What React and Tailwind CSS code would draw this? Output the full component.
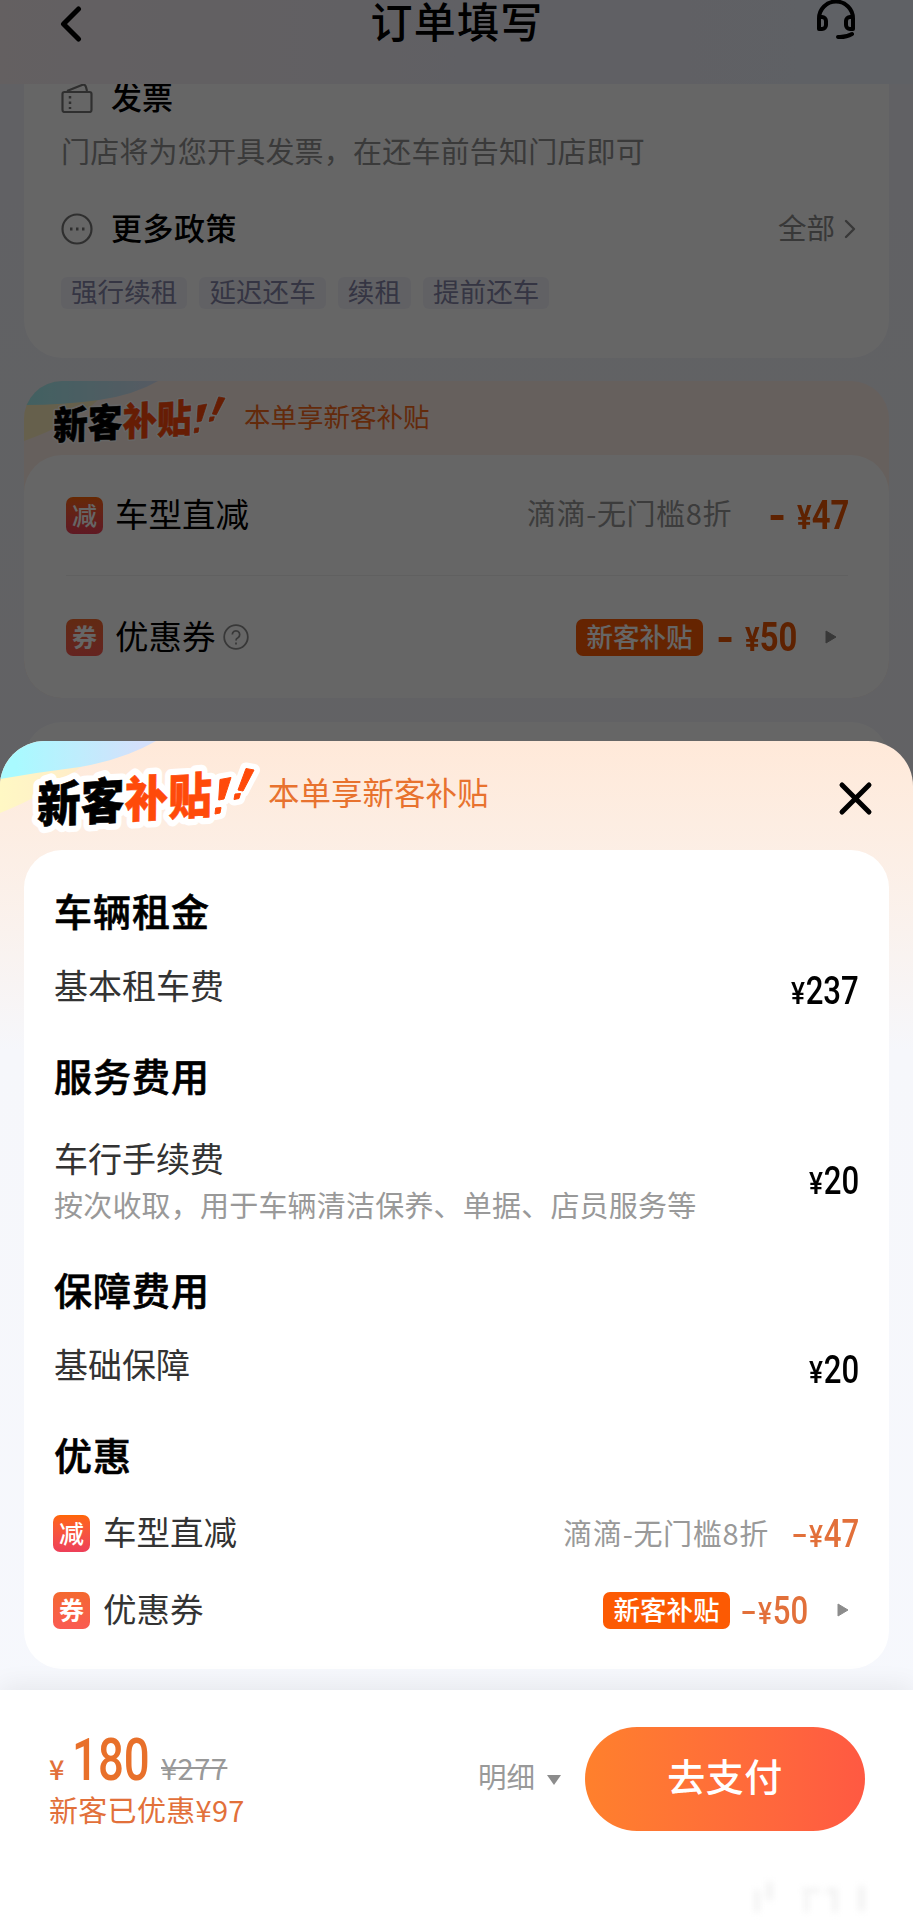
import { ChevronRight } from 'lucide-react';

const tags = ['强行续租', '延迟还车', '续租', '提前还车'];

const marks = 'M187 18.5L198 16.5L191 38L185.7 39z M182.7 47L188 46.5L187 52L182 53z M213 7.5L221 9L210 30L205 29z M202 33L207.5 32.5L206 37.5L201 38.5z';

function PromoLogo({ className, outline = 12 }) {
    return (
        <svg className={className} viewBox="0 0 226 72" overflow="visible" fontFamily='"Noto Sans CJK SC", sans-serif' fontWeight="900" fontSize="43.5">
            <g fill="#fff" stroke="#fff" strokeWidth={outline} strokeLinejoin="round">
                <text transform="translate(4 62) rotate(-3.4) skewX(-4) scale(1 1.12)" textLength="175">新客补贴</text>
                <path d={marks} />
            </g>
            <text transform="translate(4 62) rotate(-3.4) skewX(-4) scale(1 1.12)" textLength="175" strokeWidth="0.6">
                <tspan fill="#000" stroke="#000">新客</tspan>
                <tspan fill="#ff4a0a" stroke="#ff4a0a">补贴</tspan>
            </text>
            <path fill="#ff4a0a" stroke="#ff4a0a" d={marks} />
        </svg>
    );
}

function DiscountIcon({ children, coupon }) {
    return (
        <span className={`flex size-[37px] shrink-0 items-center justify-center rounded-[7px] bg-gradient-to-b text-[25px] leading-none text-white
            ${coupon ? 'from-[#f4692e] to-[#fa5a52] font-bold' : 'from-[#ff6500] to-[#ee3f58] font-medium'}`}>
            <span className="-mt-[1px]">{children}</span>
        </span>
    );
}

function Amount({ value, minus }) {
    return (
        <span className={`inline-flex origin-right scale-x-[0.82] items-baseline font-[Roboto] text-[38px] leading-none font-medium whitespace-nowrap
            ${minus ? 'text-[#e2703a]' : 'text-black'}`}>
            {minus && <span className="mr-[4px] mb-[16px] h-[3.5px] w-[15px] self-end bg-current" />}
            <span className="mr-[1px] text-[32px]">¥</span>{value}
        </span>
    );
}

function BoldAmount({ value }) {
    return (
        <span className="inline-flex origin-right scale-x-[0.8] items-baseline font-[Roboto] text-[41px] leading-none font-bold whitespace-nowrap text-[#ea5504]">
            <span className="mr-[17px] mb-[16px] h-[5px] w-[16px] self-end bg-current" />
            <span className="text-[34px]">¥</span>{value}
        </span>
    );
}

function Badge() {
    return (
        <span className="flex h-[37px] w-[127px] items-center justify-center rounded-[7px] bg-[#fc5a03] text-[26.5px] leading-none font-medium text-white">
            <span className="-mt-[2px]">新客补贴</span>
        </span>
    );
}

function Triangle({ className }) {
    return (
        <svg className={className} width="12" height="14" viewBox="0 0 12 14" fill="#8c8c8c">
            <path d="M1 1l10 6l-10 6z" stroke="#8c8c8c" strokeLinejoin="round" />
        </svg>
    );
}

function OrderPage() {
    return (
        <div className="h-[1921px] overflow-hidden bg-gradient-to-b from-[#f2f2fa] via-[#f5f7fc] to-[#f8f8f8]">
            <header className="flex h-[84px] items-start justify-between bg-gradient-to-r from-[#f9f0f3] via-[#f1eff9] to-[#edf3fd] pr-[57px] pl-[60px]">
                <svg className="mt-[5px]" width="22" height="38" viewBox="0 0 22 38" fill="none" stroke="#000" strokeWidth="5" strokeLinecap="round" strokeLinejoin="round">
                    <path d="M18.5 4L3.5 19L18.5 34" />
                </svg>
                <h1 className="ml-[16px] text-[42px] leading-[40px] font-medium tracking-[1.2px]">订单填写</h1>
                <svg width="40" height="40" viewBox="0 0 40 40" fill="none" stroke="#000" strokeWidth="4" strokeLinecap="round" strokeLinejoin="round">
                    <path d="M3 29V18.5A17 17 0 0 1 37 18.5V29M3 17H6A4 4 0 0 1 10 21V25A4 4 0 0 1 6 29H3M37 17H34A4 4 0 0 0 30 21V25A4 4 0 0 0 34 29H37M36 34Q30 37.5 22 37" />
                </svg>
            </header>

            <section className="mx-[24px] h-[274px] overflow-hidden rounded-b-[38px] bg-white px-[37px]">
                <div className="-mt-[3px] flex h-[32px] items-center">
                    <svg width="32" height="31" viewBox="0 0 32 31" fill="none" stroke="#777" strokeWidth="2.2">
                        <rect x="1.5" y="10" width="29" height="20" rx="2" />
                        <path d="M6 9L21 3Q24 2 25 5L26 9" />
                        <path d="M9 14v13" strokeDasharray="2.5 3" strokeWidth="2.5" />
                    </svg>
                    <span className="-mt-[3px] ml-[18px] text-[31px] leading-none font-medium">发票</span>
                </div>
                <p className="mt-[18px] text-[29px] leading-[38px] tracking-[0.2px] text-[#919191]">门店将为您开具发票，在还车前告知门店即可</p>
                <div className="mt-[40px] flex h-[40px] items-center">
                    <svg width="32" height="32" viewBox="0 0 32 32" fill="none" stroke="#777" strokeWidth="2.2">
                        <circle cx="16" cy="16" r="14.5" />
                        <path d="M9 16h2.5M15 16h2.5M21 16h2.5" strokeWidth="3" />
                    </svg>
                    <span className="-mt-[5px] ml-[18px] text-[31px] leading-none font-medium tracking-[0.5px]">更多政策</span>
                    <span className="-mt-[4px] ml-auto text-[28.5px] leading-none text-[#8c8c8c]">全部</span>
                    <ChevronRight className="-mr-[14px] -ml-[1px] size-[32px] text-[#8c8c8c]" strokeWidth={1.8} />
                </div>
                <div className="mt-[28px] flex gap-3">
                    {tags.map((tag) => (
                        <span key={tag} className="h-[32px] rounded-[6px] bg-[#f3f3fb] px-[10px] text-[26.5px] leading-[27px] tracking-[0.1px] text-[#8585a8]">{tag}</span>
                    ))}
                </div>
            </section>

            <section className="relative mx-[24px] mt-[23px] h-[317px] overflow-hidden rounded-[38px] bg-[#fff0e8]">
                <svg className="absolute top-0 left-0" width="140" height="90" viewBox="0 0 140 90">
                    <defs>
                        <linearGradient id="swooshSmall">
                            <stop offset="0" stopColor="#a4f2f3" />
                            <stop offset="1" stopColor="#d8e2f7" />
                        </linearGradient>
                    </defs>
                    <path d="M0 22L75 18Q50 42 0 60z" fill="#fff1bd" />
                    <path d="M0 0H134Q110 14 75 19Q40 24 0 24z" fill="url(#swooshSmall)" />
                </svg>
                <div className="relative flex h-[74px] items-center">
                    <PromoLogo className="mt-[3px] ml-[26px] h-[57px] w-[179px]" outline={4} />
                    <span className="-mt-[4px] ml-[15px] text-[26.5px] leading-none text-[#f8691c]">本单享新客补贴</span>
                </div>
                <div className="relative h-[243px] rounded-[38px] bg-white pr-[41px] pl-[42px]">
                    <div className="flex h-[121px] items-center border-b border-[#efefef]">
                        <DiscountIcon>减</DiscountIcon>
                        <span className="-mt-[5px] ml-[12px] text-[33.5px] leading-none">车型直减</span>
                        <span className="-mt-[5px] ml-auto text-[29px] leading-none tracking-[0.6px] text-[#969696]">滴滴-无门槛8折</span>
                        <span className="-mr-[1px] flex w-[117px] justify-end"><BoldAmount value="47" /></span>
                    </div>
                    <div className="flex h-[122px] items-center">
                        <DiscountIcon coupon>券</DiscountIcon>
                        <span className="-mt-[4px] ml-[12px] text-[33.5px] leading-none">优惠券</span>
                        <svg className="ml-[7px]" width="26" height="26" viewBox="0 0 26 26" fill="none" stroke="#8c8c8c" strokeWidth="1.8">
                            <circle cx="13" cy="13" r="11.8" />
                            <path d="M9.3 10.5a3.7 3.7 0 1 1 5.6 3.2q-1.9 1-1.9 2.8M13 18.5v2" />
                        </svg>
                        <span className="ml-auto"><Badge /></span>
                        <span className="flex w-[94px] justify-end"><BoldAmount value="50" /></span>
                        <Triangle className="mr-[11px] ml-[28px]" />
                    </div>
                </div>
            </section>

            <section className="mx-[24px] mt-[24px] h-[200px] rounded-[38px] bg-white" />
        </div>
    );
}

function SectionTitle({ children }) {
    return <h2 className="text-[38px] leading-[46px] font-medium tracking-[1px] text-black [-webkit-text-stroke:0.6px_black]">{children}</h2>;
}

function FeeRow({ name, desc, value }) {
    return (
        <div className="flex items-center justify-between">
            <div>
                <div className="text-[34px] leading-[46px] text-[#333]">{name}</div>
                {desc && <div className="text-[29px] leading-[46px] tracking-[0.2px] text-[#999]">{desc}</div>}
            </div>
            <span className={desc ? 'flex' : 'mt-[10px] -mb-[2px] flex'}><Amount value={value} /></span>
        </div>
    );
}

function CostSheet() {
    return (
        <div className="absolute inset-x-0 top-[741px] h-[1180px] overflow-hidden rounded-t-[45px] bg-[linear-gradient(#ffe9d9_0px,#fcefe6_120px,#f6f7fb_310px,#f6f8fd_100%)]">
            <svg className="absolute top-0 left-0" width="160" height="90" viewBox="0 0 160 90">
                <defs>
                    <linearGradient id="swoosh">
                        <stop offset="0.1" stopColor="#a9faff" />
                        <stop offset="0.9" stopColor="#d4e0fb" />
                    </linearGradient>
                    <linearGradient id="sun">
                        <stop offset="0" stopColor="#fff8c4" />
                        <stop offset="1" stopColor="#ffecc9" />
                    </linearGradient>
                </defs>
                <path d="M0 36L82 25Q50 52 0 72z" fill="url(#sun)" />
                <path d="M0 0H156Q125 18 80 26Q40 31 0 38z" fill="url(#swoosh)" />
            </svg>
            <div className="relative flex h-[109px] items-center">
                <PromoLogo className="mt-[3px] ml-[33px] h-[72px] w-[226px]" />
                <span className="-mt-[7px] ml-[9px] text-[31.5px] leading-none text-[#e8722e]">本单享新客补贴</span>
                <svg className="mt-[6px] mr-[40px] ml-auto" width="35" height="35" viewBox="0 0 35 35" stroke="#000" strokeWidth="5" strokeLinecap="round">
                    <path d="M4 4L31 31M31 4L4 31" />
                </svg>
            </div>

            <div className="relative mx-[24px] h-[819px] rounded-[38px] bg-white px-[30px] pt-[37px]">
                <SectionTitle>车辆租金</SectionTitle>
                <div className="mt-[29px]"><FeeRow name="基本租车费" value="237" /></div>
                <div className="mt-[44px]"><SectionTitle>服务费用</SectionTitle></div>
                <div className="mt-[37px]"><FeeRow name="车行手续费" desc="按次收取，用于车辆清洁保养、单据、店员服务等" value="20" /></div>
                <div className="mt-[39px]"><SectionTitle>保障费用</SectionTitle></div>
                <div className="mt-[29px]"><FeeRow name="基础保障" value="20" /></div>
                <div className="mt-[44px]"><SectionTitle>优惠</SectionTitle></div>
                <div className="mt-[33px] -ml-[1px] flex h-[46px] items-center">
                    <DiscountIcon>减</DiscountIcon>
                    <span className="-mt-[4px] ml-[13px] text-[33.5px] leading-none text-[#333]">车型直减</span>
                    <span className="-mt-[2px] ml-auto text-[29px] leading-none tracking-[0.7px] text-[#999]">滴滴-无门槛8折</span>
                    <span className="mt-[2px] flex w-[90px] justify-end"><Amount value="47" minus /></span>
                </div>
                <div className="mt-[31px] -ml-[1px] flex h-[46px] items-center">
                    <DiscountIcon coupon>券</DiscountIcon>
                    <span className="-mt-[4px] ml-[13px] text-[33.5px] leading-none text-[#333]">优惠券</span>
                    <span className="ml-auto"><Badge /></span>
                    <span className="mt-[2px] flex w-[78px] justify-end"><Amount value="50" minus /></span>
                    <Triangle className="mr-[10px] ml-[29px]" />
                </div>
            </div>
        </div>
    );
}

function PayBar() {
    return (
        <footer className="absolute inset-x-0 bottom-0 flex h-[231px] items-start bg-white pt-[37px] pr-[48px] pl-[49px] shadow-[0_-4px_24px_rgba(0,0,0,0.07)]">
            <div className="w-[429px] text-[#e2703a]">
                <div className="flex h-[67px] items-end">
                    <span className="mb-[7px] w-[23px] text-[27px] leading-[36px] font-medium">¥</span>
                    <span className="w-[89px] pb-[6px] text-[#e8702a]">
                        <span className="block w-fit origin-left scale-x-[0.76] font-[Roboto] text-[60px] leading-[56px] font-medium">180</span>
                    </span>
                    <span className="mb-[9px] text-[29px] leading-[36px] tracking-[0.5px] text-[#999] line-through">¥277</span>
                </div>
                <div className="text-[29px] leading-[30px] tracking-[0.3px]">新客已优惠¥97</div>
            </div>
            <div className="flex h-[102px] items-center">
                <span className="-mt-[4px] text-[28.5px] leading-none text-[#999]">明细</span>
                <svg className="mt-[3px] ml-[12px]" width="14" height="10" viewBox="0 0 14 10" fill="#8c8c8c">
                    <path d="M0 0h14l-7 10z" />
                </svg>
            </div>
            <button className="ml-auto h-[104px] w-[280px] rounded-full bg-gradient-to-r from-[#ff802c] to-[#ff5942] pb-[9px] text-[38px] font-medium tracking-[0.5px] text-white">去支付</button>
            <svg className="absolute right-[41px] bottom-[7px] blur-[3px]" width="122" height="34" viewBox="0 0 122 34" fill="#f3f3f3">
                <path d="M4 10h6v22h-6z M16 2h7v18h-7z M52 8h18v5h-18z M54 14h5v18h-5z M76 8h12v24h-6v-18h-6z M108 6h7v25h-7z" />
            </svg>
        </footer>
    );
}

export default function App() {
    return (
        <div className='relative h-[1921px] w-[913px] overflow-hidden font-["Noto_Sans_CJK_SC",sans-serif] text-black'>
            <OrderPage />
            <div className="absolute inset-0 bg-black/60" />
            <CostSheet />
            <PayBar />
        </div>
    );
}
